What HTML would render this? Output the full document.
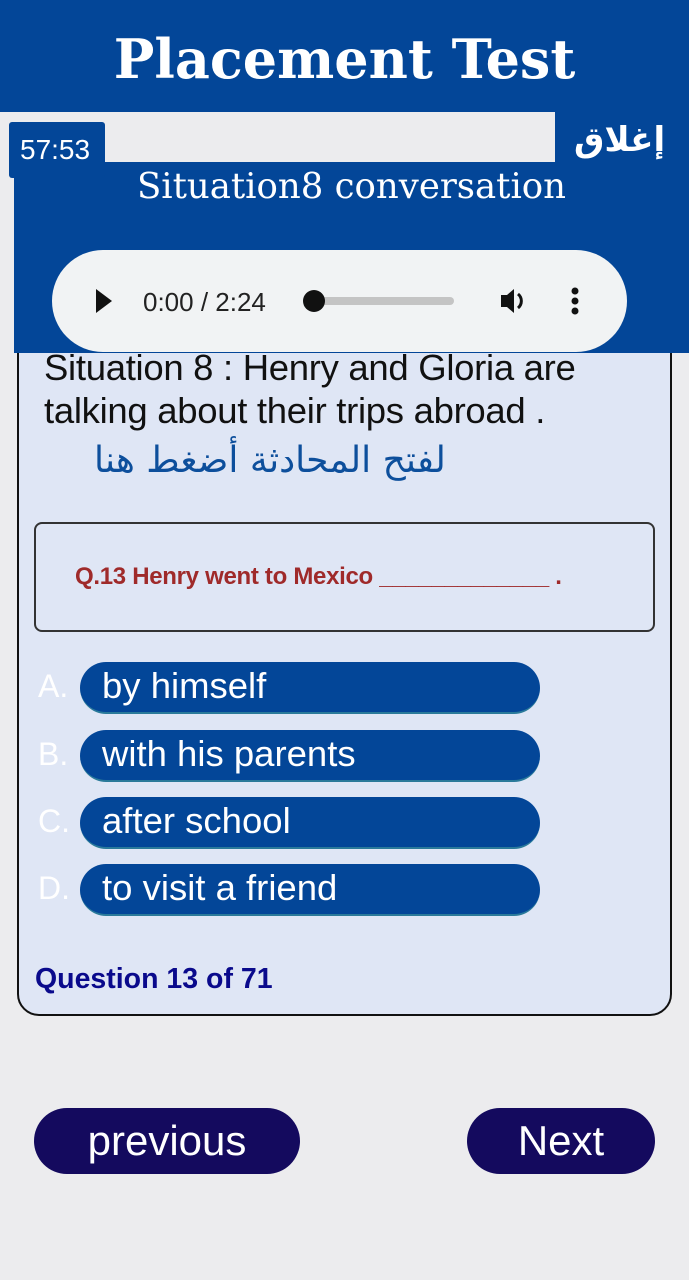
<!DOCTYPE html>
<html><head><meta charset="utf-8"><style>
*{margin:0;padding:0;box-sizing:border-box}
body{width:689px;height:1280px;background:#ececee;position:relative;overflow:hidden;font-family:"Liberation Sans","Noto Sans CJK SC",sans-serif}
.abs{position:absolute}
.blue{background:#034698}
.opt{position:absolute;left:80px;width:460px;height:52px;border-radius:26px;background:#034698;border-bottom:2px solid #2a7a9a;color:#fff;font-size:36.5px;line-height:48px;padding-left:22px}
.let{position:absolute;left:38px;color:#fff;font-size:32px;line-height:48px}
.btn{position:absolute;top:1108px;height:66px;border-radius:33px;background:#140a5e;color:#fff;font-size:42px;line-height:66px;text-align:center}
</style></head><body>
<div class="abs" style="left:17px;top:300px;width:655px;height:716px;background:#dfe6f5;border:2px solid #111;border-radius:0 0 22px 22px"></div>
<div class="abs blue" style="left:0;top:0;width:689px;height:112px"></div>
<div class="abs" style="left:0;top:0;width:689px;height:112px;text-align:center;color:#fff;font-family:'DejaVu Serif',serif;font-weight:bold;font-size:54px;line-height:118px">Placement Test</div>
<div class="abs blue" style="left:14px;top:112px;width:675px;height:241px"></div>
<div class="abs" style="left:0;top:112px;width:555px;height:50px;background:#ececee"></div>
<div class="abs" style="left:0;top:162px;width:14px;height:140px;background:#ececee"></div>
<div class="abs blue" style="left:9px;top:122px;width:96px;height:56px;border-radius:3px;color:#fff;font-size:28px;line-height:56px;padding-left:11px">57:53</div>
<div class="abs" style="left:574px;top:120px;color:#fff;font-size:34px;font-weight:bold;font-family:'DejaVu Sans',sans-serif">إغلاق</div>
<div class="abs" style="left:14px;top:162px;width:675px;text-align:center;color:#fff;font-family:'DejaVu Serif',serif;font-size:35.5px;line-height:50px">Situation8 conversation</div>
<div class="abs" style="left:52px;top:250px;width:575px;height:102px;border-radius:51px;background:#f1f3f4"></div>
<svg class="abs" style="left:52px;top:250px" width="575" height="102">
<polygon points="44,39 44,63 60,51" fill="#111"/>
<text x="91" y="61" font-family="Liberation Sans" font-size="26" fill="#222">0:00 / 2:24</text>
<rect x="260" y="47" width="142" height="8" rx="4" fill="#c4c4c4"/>
<circle cx="262" cy="51" r="11" fill="#111"/>
<polygon points="449,45 455,45 462,39 462,63 455,57 449,57" fill="#111"/>
<path d="M466,44 a9,9 0 0 1 0,14" stroke="#111" stroke-width="3" fill="none"/>
<circle cx="523" cy="41" r="3.5" fill="#111"/><circle cx="523" cy="51" r="3.5" fill="#111"/><circle cx="523" cy="61" r="3.5" fill="#111"/>
</svg>
<div class="abs" style="left:44px;top:346px;font-size:36.5px;line-height:43px;color:#111;letter-spacing:-0.3px">Situation 8 : Henry and Gloria are<br>talking about their trips abroad .</div>
<div class="abs" style="left:94px;top:440px;color:#0d4f9c;font-size:36px;font-family:'DejaVu Sans',sans-serif">لفتح المحادثة أضغط هنا</div>
<div class="abs" style="left:34px;top:522px;width:621px;height:110px;border:2px solid #333;border-radius:8px"></div>
<div class="abs" style="left:75px;top:563px;color:#9f2a2a;font-size:24px;font-weight:bold;letter-spacing:-0.3px">Q.13 Henry went to Mexico _____________ .</div>
<div class="let" style="top:662px">A.</div><div class="opt" style="top:662px">by himself</div>
<div class="let" style="top:730px">B.</div><div class="opt" style="top:730px">with his parents</div>
<div class="let" style="top:797px">C.</div><div class="opt" style="top:797px">after school</div>
<div class="let" style="top:864px">D.</div><div class="opt" style="top:864px">to visit a friend</div>
<div class="abs" style="left:35px;top:963px;color:#0a0a8c;font-size:28.5px;font-weight:bold">Question 13 of 71</div>
<div class="btn" style="left:34px;width:266px">previous</div>
<div class="btn" style="left:467px;width:188px">Next</div>
</body></html>
